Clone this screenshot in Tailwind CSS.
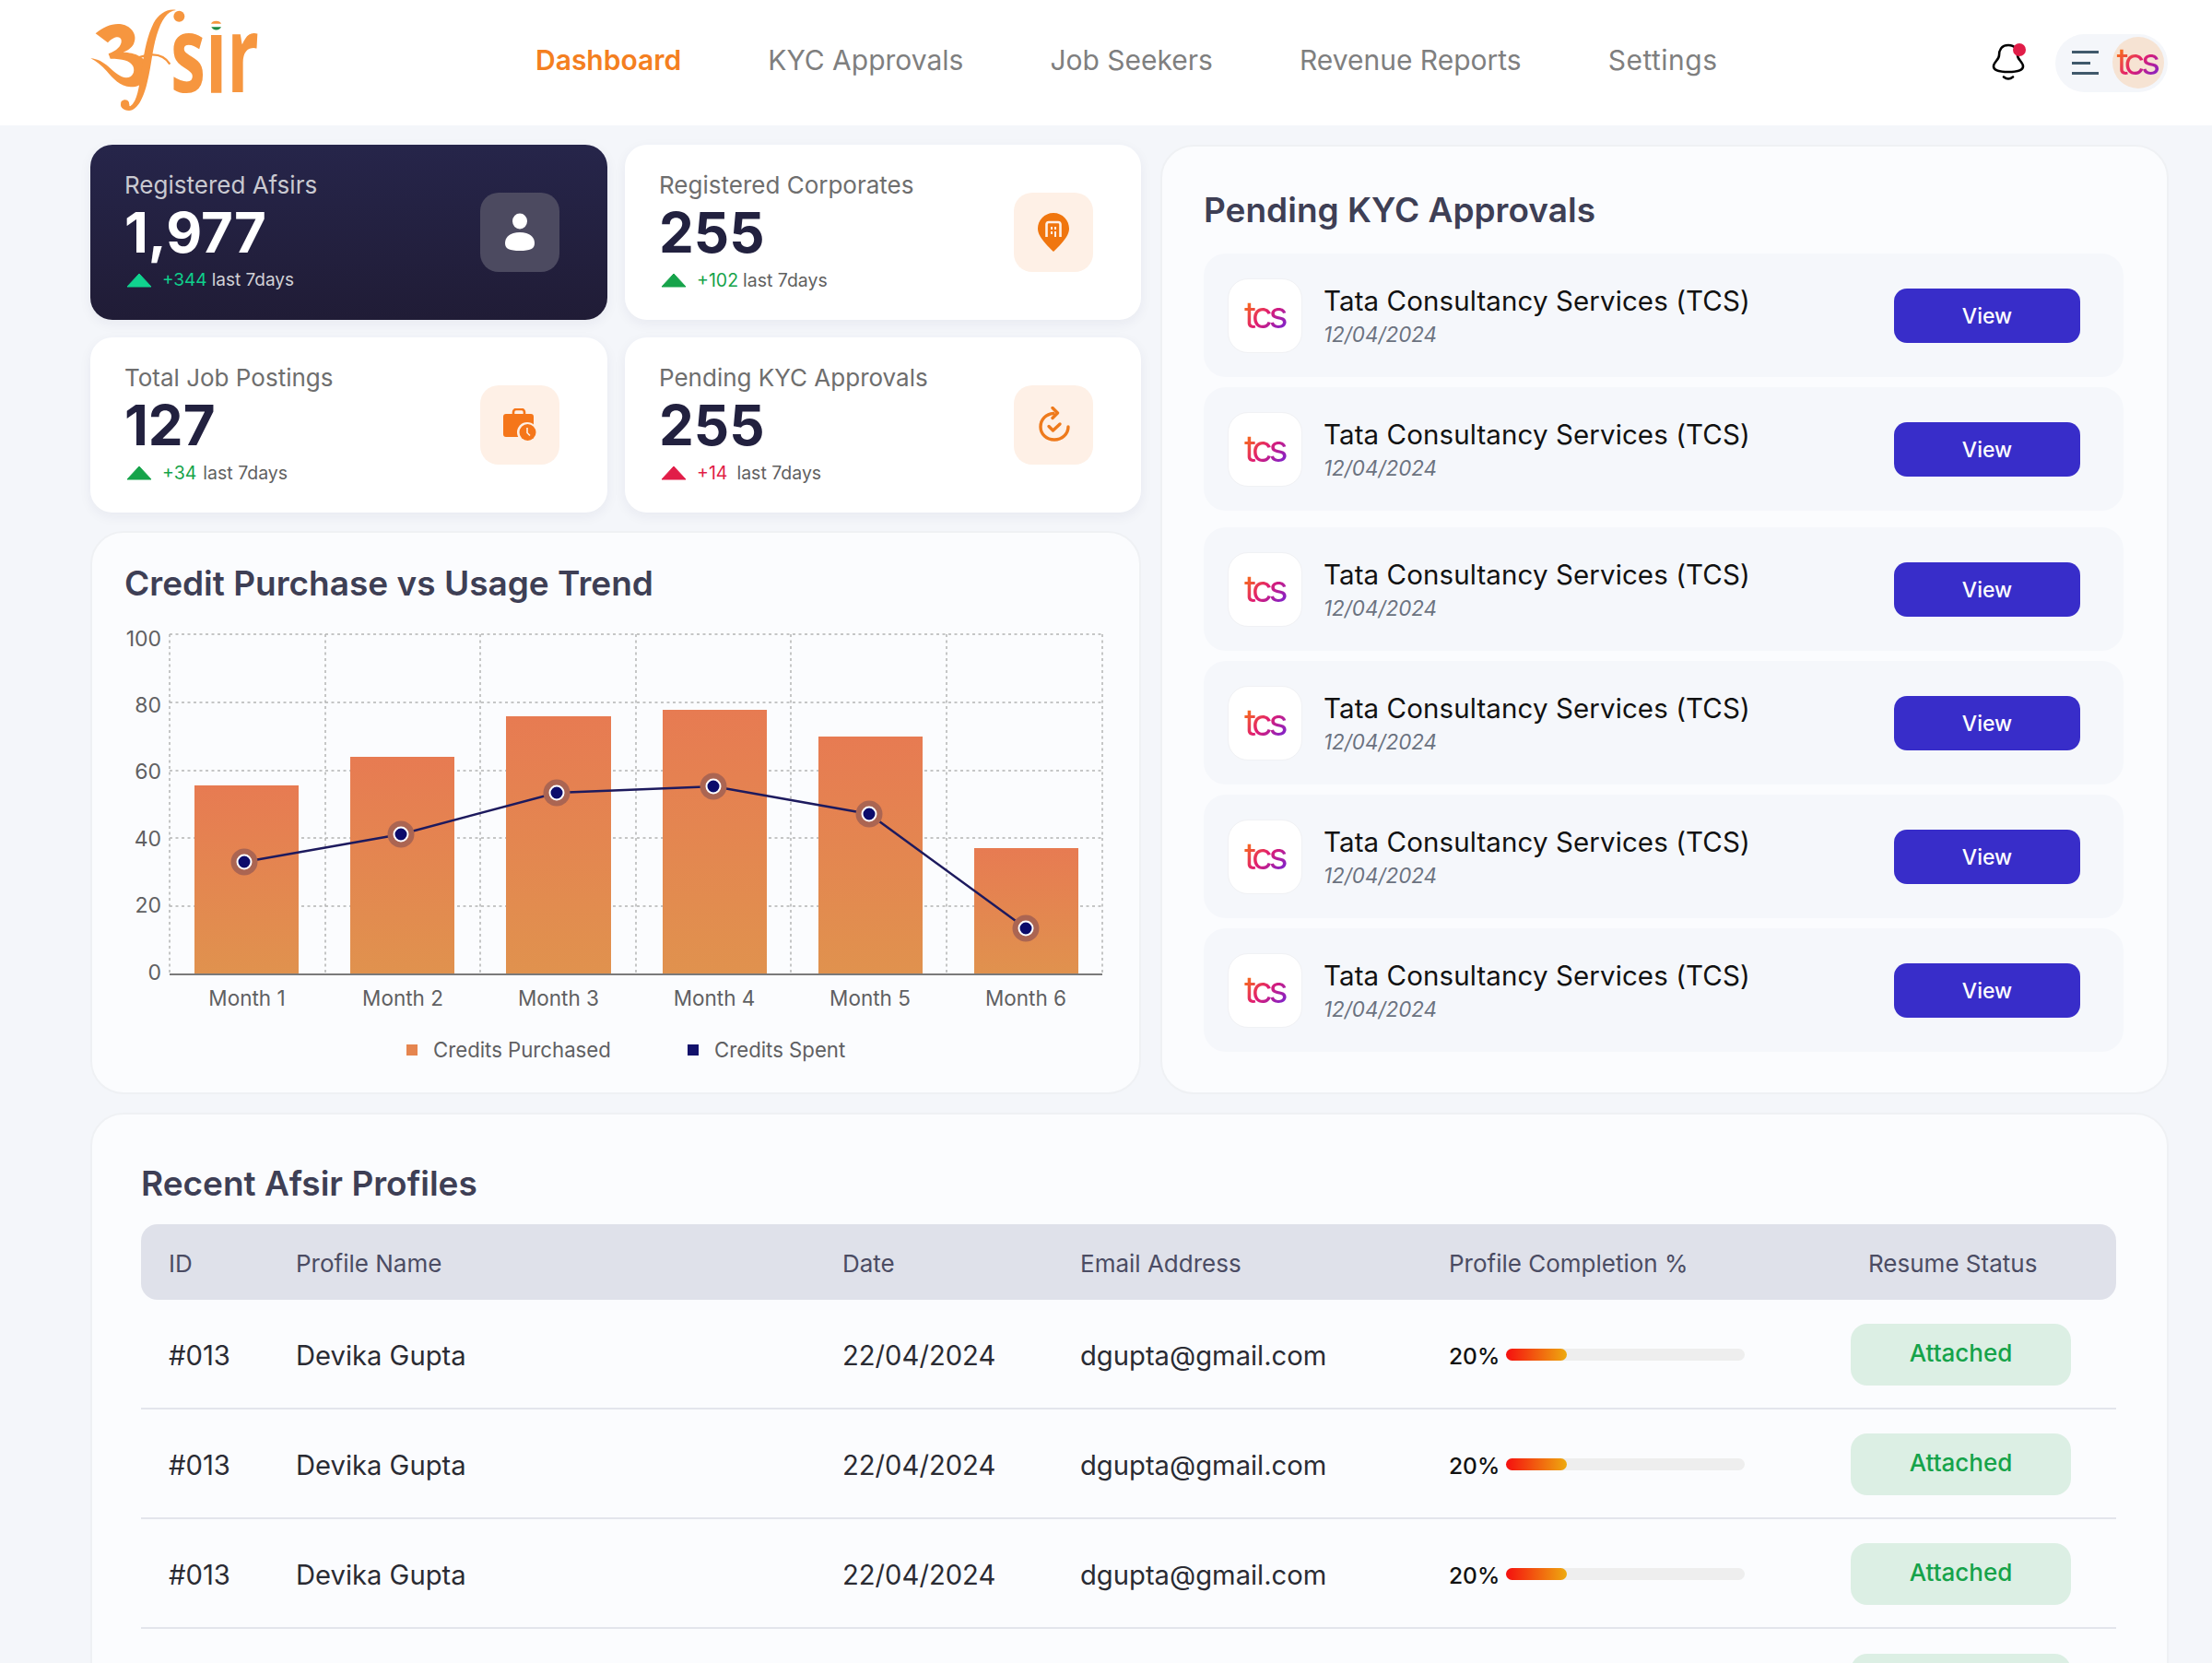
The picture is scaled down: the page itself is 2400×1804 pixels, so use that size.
<!DOCTYPE html>
<html>
<head>
<meta charset="utf-8">
<script src="https://cdn.jsdelivr.net/npm/@tailwindcss/browser@4"></script>
</head>
<body class="[font-family:Inter,sans-serif]">
<div class="h-[1804px] w-[2400px] overflow-hidden bg-[#f4f6fa]">
  <header class="flex h-[136px] items-center bg-white">
    <svg class="ml-[85px] mt-[-1px] h-[125px] w-[210px] shrink-0" viewBox="0 0 630 375">
      <path fill="#f6963f" d="M56 94C82 72 112 60 140 64C174 70 194 100 180 128C172 143 158 150 146 155C184 156 222 170 226 206C230 240 206 270 170 268C136 266 112 240 92 216C76 198 58 184 40 175C62 176 82 188 98 202C118 220 138 238 156 238C176 238 186 218 178 200C168 182 144 176 104 176L98 160C124 150 142 134 140 116C138 102 118 100 96 124Z"/>
      <path fill="#f6963f" d="M318 18C290 20 270 50 255 100C240 150 238 200 225 250C215 295 195 345 165 345C145 345 135 330 140 315C150 305 165 310 165 322C165 335 170 332 178 322C195 300 200 250 208 200C215 150 225 100 245 60C262 30 290 12 318 18Z"/>
      <circle cx="328" cy="38" r="18" fill="#f6963f"/>
      <circle cx="152" cy="326" r="14" fill="#f6963f"/>
      <path fill="none" stroke="#f6963f" stroke-width="7" d="M196 172C236 158 276 158 298 194"/>
      <text x="300" y="284" font-size="345" font-weight="700" textLength="288" lengthAdjust="spacingAndGlyphs" fill="#f6963f" style="font-family:'Open Sans',sans-serif">sir</text>
      <rect x="420" y="14" width="60" height="80" fill="#fff"/>
      <path fill="#f6963f" d="M432 62a17 12 0 0 1 33 0z"/>
      <path fill="#1f8a43" d="M433 73h32a17 14 0 0 1-32 0z"/>
    </svg>
    <nav class="ml-[286px] -mt-[6px] flex items-center gap-[94px] text-[30px] leading-none text-[#7f7f7f]">
      <a class="font-semibold text-[#f47f20]">Dashboard</a>
      <a>KYC Approvals</a>
      <a>Job Seekers</a>
      <a>Revenue Reports</a>
      <a class="tracking-[0.5px]">Settings</a>
    </nav>
    <div class="ml-auto mr-[48px] flex items-center gap-[33px]">
      <div class="relative h-[42px] w-[36px]">
        <svg class="h-[42px] w-[36px]" viewBox="0 0 36 42" fill="none" stroke="#000" stroke-width="2.6" stroke-linecap="round"><path d="M18 2C10 2 8 8 8 13C8 18 2 20 2 25C2 29 7 31 18 31C29 31 34 29 34 25C34 20 28 18 28 13C28 8 26 2 18 2Z"/><path d="M13 36.5Q18 40.500 23 36.500"/></svg>
        <span class="absolute right-[-1px] top-[0px] h-[14px] w-[14px] rounded-full bg-[#e11d48]"></span>
      </div>
      <div class="flex h-[63px] w-[122px] items-center justify-between rounded-full bg-[#f4f6fa] pl-[18px] pr-[4px]">
        <div class="flex flex-col gap-[8.500px]">
          <span class="block h-[3px] w-[29px] bg-[#40596b]"></span>
          <span class="block h-[3px] w-[20px] bg-[#40596b]"></span>
          <span class="block h-[3px] w-[29px] bg-[#40596b]"></span>
        </div>
        <div class="flex h-[56px] w-[56px] items-center justify-center rounded-full bg-[#f6e3d3]">
          <span class="bg-[linear-gradient(135deg,#f97316_10%,#e11d70_50%,#7c22ce_90%)] bg-clip-text pb-[3px] pr-[4px] text-[40px] font-normal leading-none tracking-[-4.500px] text-transparent">tcs</span>
        </div>
      </div>
    </div>
  </header>

  <main class="flex flex-col gap-[20px] pl-[98px] pr-[47px] pt-[21px]">
    <div class="flex gap-[21px]">
      <div class="flex w-[1140px] flex-col gap-[20px]">
        <div class="grid grid-cols-[561px_560px] gap-x-[19px] gap-y-[19px]">
          <!-- Card 1 -->
          <div class="flex h-[190px] items-center justify-between rounded-[24px] bg-[linear-gradient(180deg,#26254a,#201c36)] pl-[37px] pr-[52px] shadow-[0_4px_14px_rgba(30,40,80,0.06)]">
            <div>
              <p class="-mt-[1px] text-[26px] leading-[32px] text-[#c9c9d0]">Registered Afsirs</p>
              <p class="mt-[3px] text-[60px] font-bold leading-[64px] text-white">1,977</p>
              <p class="mt-[6px] flex items-center text-[19px] leading-[28px] text-[#d1d1d6]"><svg class="mr-[11px] ml-[2px] h-[16px] w-[28px]" viewBox="0 0 28 16"><path d="M14 1L27 15H1Z" fill="#10d38f" stroke="#10d38f" stroke-linejoin="round"/></svg><span class="text-[#0fcf8c]">+344</span><span class="ml-[5px]">last 7days</span></p>
            </div>
            <div class="flex h-[86px] w-[86px] items-center justify-center rounded-[20px] bg-[#4c4a60]">
              <svg class="h-[42px] w-[34px]" viewBox="0 0 34 42" fill="#fff"><ellipse cx="17" cy="9" rx="8" ry="8.500"/><path d="M1 33C1 25 8 21 17 21C26 21 33 25 33 33C33 39 28 41 17 41C6 41 1 39 1 33Z"/></svg>
            </div>
          </div>
          <!-- Card 2 -->
          <div class="flex h-[190px] items-center justify-between rounded-[24px] bg-white pl-[37px] pr-[52px] shadow-[0_4px_14px_rgba(30,40,80,0.06)]">
            <div>
              <p class="-mt-[1px] text-[26px] leading-[32px] text-[#6e6e6e]">Registered Corporates</p>
              <p class="mt-[3px] text-[60px] font-bold leading-[64px] text-[#22213f]">255</p>
              <p class="mt-[6px] flex items-center text-[19.500px] leading-[28px] text-[#5f5f5f]"><svg class="mr-[11px] ml-[2px] h-[16px] w-[28px]" viewBox="0 0 28 16"><path d="M14 1L27 15H1Z" fill="#16a34a" stroke="#16a34a" stroke-linejoin="round"/></svg><span class="text-[#16a34a]">+102</span><span class="ml-[5px]">last 7days</span></p>
            </div>
            <div class="flex h-[86px] w-[86px] items-center justify-center rounded-[20px] bg-[#fef0e6]">
              <svg class="h-[44px] w-[36px]" viewBox="0 0 36 44"><path d="M18 1C8 1 1 9 1 18C1 27 11 36 18 43C25 36 35 27 35 18C35 9 28 1 18 1Z" fill="#f0760f"/><path d="M10.500 27V13.500a2.500 2.500 0 0 1 2.500-2.500h10a2.500 2.500 0 0 1 2.500 2.500V27" fill="none" stroke="#fef0e6" stroke-width="2.600"/><path d="M15 16h2v3h-2zM19 16h2v3h-2zM15 21h2v3h-2zM19 21h2v6h-2z" fill="#fef0e6"/></svg>
            </div>
          </div>
          <!-- Card 3 -->
          <div class="flex h-[190px] items-center justify-between rounded-[24px] bg-white pl-[37px] pr-[52px] shadow-[0_4px_14px_rgba(30,40,80,0.06)]">
            <div>
              <p class="-mt-[1px] text-[26px] leading-[32px] text-[#6e6e6e]">Total Job Postings</p>
              <p class="mt-[3px] text-[60px] font-bold leading-[64px] text-[#22213f]">127</p>
              <p class="mt-[6px] flex items-center text-[19.500px] leading-[28px] text-[#5f5f5f]"><svg class="mr-[11px] ml-[2px] h-[16px] w-[28px]" viewBox="0 0 28 16"><path d="M14 1L27 15H1Z" fill="#16a34a" stroke="#16a34a" stroke-linejoin="round"/></svg><span class="text-[#16a34a]">+34</span><span class="ml-[7px]">last 7days</span></p>
            </div>
            <div class="flex h-[86px] w-[86px] items-center justify-center rounded-[20px] bg-[#fef0e6]">
              <svg class="h-[36px] w-[38px]" viewBox="0 0 38 36"><path d="M12 6V4a3 3 0 0 1 3-3h6a3 3 0 0 1 3 3v2" fill="none" stroke="#f5761a" stroke-width="2.600"/><rect x="1" y="6" width="33" height="25" rx="3" fill="#f5761a"/><circle cx="27" cy="26" r="11" fill="#fef0e6"/><circle cx="27.500" cy="26" r="9" fill="#f5761a"/><path d="M27 21v5.500l3 3" fill="none" stroke="#fef0e6" stroke-width="1.600"/></svg>
            </div>
          </div>
          <!-- Card 4 -->
          <div class="flex h-[190px] items-center justify-between rounded-[24px] bg-white pl-[37px] pr-[52px] shadow-[0_4px_14px_rgba(30,40,80,0.06)]">
            <div>
              <p class="-mt-[1px] text-[26px] leading-[32px] text-[#6e6e6e]">Pending KYC Approvals</p>
              <p class="mt-[3px] text-[60px] font-bold leading-[64px] text-[#22213f]">255</p>
              <p class="mt-[6px] flex items-center text-[19.500px] leading-[28px] text-[#5f5f5f]"><svg class="mr-[11px] ml-[2px] h-[16px] w-[28px]" viewBox="0 0 28 16"><path d="M14 1L27 15H1Z" fill="#e11d48" stroke="#e11d48" stroke-linejoin="round"/></svg><span class="text-[#e11d48]">+14</span><span class="ml-[10px]">last 7days</span></p>
            </div>
            <div class="flex h-[86px] w-[86px] items-center justify-center rounded-[20px] bg-[#fef0e6]">
              <svg class="-mt-[3px] ml-[2px] h-[38px] w-[36px]" viewBox="0 0 36 38" fill="none" stroke="#ee7a1c" stroke-width="3.400" stroke-linecap="round" stroke-linejoin="round"><path d="M17 7.500C9 8 3 14 3 22C3 30 9.500 36 18 36C26 36 33 30 33 22"/><path d="M16 1.500L21.500 7L16 12.500"/><path d="M12 21.500L16.500 26L24 19"/></svg>
            </div>
          </div>
        </div>
        <!-- Chart -->
        <section class="h-[611px] rounded-[36px] border-2 border-[#eff1f4] bg-[#fbfcfe]">
          <h2 class="h-[70px] pl-[35px] pt-[32px] text-[37px] font-semibold leading-[46px] text-[#3e3f55]">Credit Purchase vs Usage Trend</h2>
          <svg class="block" width="1136" height="536" viewBox="100 648 1136 536" style="font-family:Inter,sans-serif">
            <defs><linearGradient id="barfill" x1="0" y1="0" x2="0" y2="1"><stop offset="0" stop-color="#e77b52"/><stop offset="1" stop-color="#e0924e"/></linearGradient></defs>
            <g stroke="#b4b4b4" stroke-width="1.500" stroke-dasharray="3 3.500" fill="none">
              <path d="M184 688H1196M184 762H1196M184 836H1196M184 909H1196M184 983H1196"/>
              <path d="M184 688V1057M353 688V1057M521 688V1057M690 688V1057M858 688V1057M1027 688V1057M1196 688V1057"/>
            </g>
            <rect x="211" y="852" width="113" height="205" fill="url(#barfill)"/>
            <rect x="380" y="821" width="113" height="236" fill="url(#barfill)"/>
            <rect x="549" y="777" width="114" height="280" fill="url(#barfill)"/>
            <rect x="719" y="770" width="113" height="287" fill="url(#barfill)"/>
            <rect x="888" y="799" width="113" height="258" fill="url(#barfill)"/>
            <rect x="1057" y="920" width="113" height="137" fill="url(#barfill)"/>
            <path d="M184 1057H1196" stroke="#7a7a7a" stroke-width="2"/>
            <path d="M265 935L435 905L604 860L774 853L943 883L1113 1007" fill="none" stroke="#1d1a5e" stroke-width="2.500"/>
            <g fill="#ab6552">
              <circle cx="265" cy="935" r="14.500"/><circle cx="435" cy="905" r="14.500"/><circle cx="604" cy="860" r="14.500"/><circle cx="774" cy="853" r="14.500"/><circle cx="943" cy="883" r="14.500"/><circle cx="1113" cy="1007" r="14.500"/>
            </g>
            <g fill="#0c0c6b" stroke="#fff" stroke-width="2">
              <circle cx="265" cy="935" r="7.500"/><circle cx="435" cy="905" r="7.500"/><circle cx="604" cy="860" r="7.500"/><circle cx="774" cy="853" r="7.500"/><circle cx="943" cy="883" r="7.500"/><circle cx="1113" cy="1007" r="7.500"/>
            </g>
            <g fill="#5f6062" font-size="23" text-anchor="end">
              <text x="175" y="701">100</text><text x="175" y="773">80</text><text x="175" y="845">60</text><text x="175" y="918">40</text><text x="175" y="990">20</text><text x="175" y="1063">0</text>
            </g>
            <g fill="#5f6062" font-size="22.500" text-anchor="middle">
              <text x="268" y="1091">Month 1</text><text x="437" y="1091">Month 2</text><text x="606" y="1091">Month 3</text><text x="775" y="1091">Month 4</text><text x="944" y="1091">Month 5</text><text x="1113" y="1091">Month 6</text>
            </g>
            <rect x="441" y="1133" width="12" height="12" fill="#e5854f"/>
            <text x="470" y="1147" font-size="22.200" fill="#5f6062">Credits Purchased</text>
            <rect x="746" y="1133" width="12" height="12" fill="#12116b"/>
            <text x="775" y="1147" font-size="22.200" fill="#5f6062">Credits Spent</text>
          </svg>
        </section>
      </div>
      <!-- Pending KYC -->
      <section class="h-[1030px] w-[1094px] rounded-[36px] border-2 border-[#eff1f4] bg-[#fbfcfe] pl-[45px] pr-[47px]">
        <h2 class="pt-[46px] text-[37px] font-semibold leading-[46px] text-[#3e3f55]">Pending KYC Approvals</h2>
        <div class="mt-[24px] flex flex-col gap-[11px]">
          <div class="flex h-[134px] items-center rounded-[24px] bg-[#f5f7fb] pl-[26px] pr-[47px]">
            <div class="flex h-[81px] w-[81px] items-center justify-center rounded-[22px] border border-[#f0f1f4] bg-white"><span class="bg-[linear-gradient(135deg,#f97316_10%,#e11d70_50%,#7c22ce_90%)] bg-clip-text pr-[4px] pl-[2px] text-[40px] font-normal leading-none tracking-[-4.500px] text-transparent">tcs</span></div>
            <div class="ml-[23px]"><p class="text-[29.500px] leading-[38px] tracking-[0.1px] text-[#111]">Tata Consultancy Services (TCS)</p><p class="mt-[3px] text-[22.400px] italic leading-[30px] text-[#6b7280]">12/04/2024</p></div>
            <button class="ml-auto h-[59px] w-[202px] rounded-[14px] bg-[#382dc9] pt-[2px] text-[23px] font-medium text-white">View</button>
          </div>
          <div class="flex h-[134px] items-center rounded-[24px] bg-[#f5f7fb] pl-[26px] pr-[47px]">
            <div class="flex h-[81px] w-[81px] items-center justify-center rounded-[22px] border border-[#f0f1f4] bg-white"><span class="bg-[linear-gradient(135deg,#f97316_10%,#e11d70_50%,#7c22ce_90%)] bg-clip-text pr-[4px] pl-[2px] text-[40px] font-normal leading-none tracking-[-4.500px] text-transparent">tcs</span></div>
            <div class="ml-[23px]"><p class="text-[29.500px] leading-[38px] tracking-[0.1px] text-[#111]">Tata Consultancy Services (TCS)</p><p class="mt-[3px] text-[22.400px] italic leading-[30px] text-[#6b7280]">12/04/2024</p></div>
            <button class="ml-auto h-[59px] w-[202px] rounded-[14px] bg-[#382dc9] pt-[2px] text-[23px] font-medium text-white">View</button>
          </div>
          <div class="mt-[7px] flex h-[134px] items-center rounded-[24px] bg-[#f5f7fb] pl-[26px] pr-[47px]">
            <div class="flex h-[81px] w-[81px] items-center justify-center rounded-[22px] border border-[#f0f1f4] bg-white"><span class="bg-[linear-gradient(135deg,#f97316_10%,#e11d70_50%,#7c22ce_90%)] bg-clip-text pr-[4px] pl-[2px] text-[40px] font-normal leading-none tracking-[-4.500px] text-transparent">tcs</span></div>
            <div class="ml-[23px]"><p class="text-[29.500px] leading-[38px] tracking-[0.1px] text-[#111]">Tata Consultancy Services (TCS)</p><p class="mt-[3px] text-[22.400px] italic leading-[30px] text-[#6b7280]">12/04/2024</p></div>
            <button class="ml-auto h-[59px] w-[202px] rounded-[14px] bg-[#382dc9] pt-[2px] text-[23px] font-medium text-white">View</button>
          </div>
          <div class="flex h-[134px] items-center rounded-[24px] bg-[#f5f7fb] pl-[26px] pr-[47px]">
            <div class="flex h-[81px] w-[81px] items-center justify-center rounded-[22px] border border-[#f0f1f4] bg-white"><span class="bg-[linear-gradient(135deg,#f97316_10%,#e11d70_50%,#7c22ce_90%)] bg-clip-text pr-[4px] pl-[2px] text-[40px] font-normal leading-none tracking-[-4.500px] text-transparent">tcs</span></div>
            <div class="ml-[23px]"><p class="text-[29.500px] leading-[38px] tracking-[0.1px] text-[#111]">Tata Consultancy Services (TCS)</p><p class="mt-[3px] text-[22.400px] italic leading-[30px] text-[#6b7280]">12/04/2024</p></div>
            <button class="ml-auto h-[59px] w-[202px] rounded-[14px] bg-[#382dc9] pt-[2px] text-[23px] font-medium text-white">View</button>
          </div>
          <div class="flex h-[134px] items-center rounded-[24px] bg-[#f5f7fb] pl-[26px] pr-[47px]">
            <div class="flex h-[81px] w-[81px] items-center justify-center rounded-[22px] border border-[#f0f1f4] bg-white"><span class="bg-[linear-gradient(135deg,#f97316_10%,#e11d70_50%,#7c22ce_90%)] bg-clip-text pr-[4px] pl-[2px] text-[40px] font-normal leading-none tracking-[-4.500px] text-transparent">tcs</span></div>
            <div class="ml-[23px]"><p class="text-[29.500px] leading-[38px] tracking-[0.1px] text-[#111]">Tata Consultancy Services (TCS)</p><p class="mt-[3px] text-[22.400px] italic leading-[30px] text-[#6b7280]">12/04/2024</p></div>
            <button class="ml-auto h-[59px] w-[202px] rounded-[14px] bg-[#382dc9] pt-[2px] text-[23px] font-medium text-white">View</button>
          </div>
          <div class="flex h-[134px] items-center rounded-[24px] bg-[#f5f7fb] pl-[26px] pr-[47px]">
            <div class="flex h-[81px] w-[81px] items-center justify-center rounded-[22px] border border-[#f0f1f4] bg-white"><span class="bg-[linear-gradient(135deg,#f97316_10%,#e11d70_50%,#7c22ce_90%)] bg-clip-text pr-[4px] pl-[2px] text-[40px] font-normal leading-none tracking-[-4.500px] text-transparent">tcs</span></div>
            <div class="ml-[23px]"><p class="text-[29.500px] leading-[38px] tracking-[0.1px] text-[#111]">Tata Consultancy Services (TCS)</p><p class="mt-[3px] text-[22.400px] italic leading-[30px] text-[#6b7280]">12/04/2024</p></div>
            <button class="ml-auto h-[59px] w-[202px] rounded-[14px] bg-[#382dc9] pt-[2px] text-[23px] font-medium text-white">View</button>
          </div>
        </div>
      </section>
    </div>

    <!-- Recent profiles -->
    <section class="rounded-t-[36px] border-2 border-[#eff1f4] bg-[#fbfcfe] pl-[53px] pr-[55px] pb-[40px]">
      <h2 class="pt-[52px] text-[37px] font-semibold leading-[46px] text-[#3e3f55]">Recent Afsir Profiles</h2>
      <div class="mt-[21px] grid h-[82px] grid-cols-[138px_593px_258px_400px_436px_1fr] items-center rounded-[18px] bg-[#dfe1ea] pl-[30px] pt-[3px] text-[26px] text-[#4b4c63]">
        <span>ID</span><span>Profile Name</span><span>Date</span><span>Email Address</span><span>Profile Completion %</span><span class="whitespace-nowrap pl-[19px]">Resume Status</span>
      </div>

      <div class="grid h-[119px] grid-cols-[138px_593px_258px_400px_436px_1fr] items-center border-b-2 border-[#e3e5ec] pl-[30px] pt-[2px] text-[29.200px] text-[#2a2b33]">
        <span class="pt-[3px]">#013</span><span class="pt-[3px]">Devika Gupta</span><span class="pt-[3px]">22/04/2024</span><span class="pt-[3px]">dgupta@gmail.com</span>
        <div class="flex items-center"><span class="w-[62px] pt-[4px] text-[24.500px] font-medium text-[#111]">20%</span><div class="h-[13px] w-[259px] rounded-full bg-[#eeeeee]"><div class="h-[13px] w-[66px] rounded-full bg-[linear-gradient(90deg,#f50f0f,#eeaa0f)]"></div></div></div>
        <div class="flex h-[67px] w-[239px] items-center justify-center rounded-[18px] bg-[#dcefe4] pb-[4px] text-[26px] font-medium text-[#16a34a]">Attached</div>
      </div>
      <div class="grid h-[119px] grid-cols-[138px_593px_258px_400px_436px_1fr] items-center border-b-2 border-[#e3e5ec] pl-[30px] pt-[2px] text-[29.200px] text-[#2a2b33]">
        <span class="pt-[3px]">#013</span><span class="pt-[3px]">Devika Gupta</span><span class="pt-[3px]">22/04/2024</span><span class="pt-[3px]">dgupta@gmail.com</span>
        <div class="flex items-center"><span class="w-[62px] pt-[4px] text-[24.500px] font-medium text-[#111]">20%</span><div class="h-[13px] w-[259px] rounded-full bg-[#eeeeee]"><div class="h-[13px] w-[66px] rounded-full bg-[linear-gradient(90deg,#f50f0f,#eeaa0f)]"></div></div></div>
        <div class="flex h-[67px] w-[239px] items-center justify-center rounded-[18px] bg-[#dcefe4] pb-[4px] text-[26px] font-medium text-[#16a34a]">Attached</div>
      </div>
      <div class="grid h-[119px] grid-cols-[138px_593px_258px_400px_436px_1fr] items-center border-b-2 border-[#e3e5ec] pl-[30px] pt-[2px] text-[29.200px] text-[#2a2b33]">
        <span class="pt-[3px]">#013</span><span class="pt-[3px]">Devika Gupta</span><span class="pt-[3px]">22/04/2024</span><span class="pt-[3px]">dgupta@gmail.com</span>
        <div class="flex items-center"><span class="w-[62px] pt-[4px] text-[24.500px] font-medium text-[#111]">20%</span><div class="h-[13px] w-[259px] rounded-full bg-[#eeeeee]"><div class="h-[13px] w-[66px] rounded-full bg-[linear-gradient(90deg,#f50f0f,#eeaa0f)]"></div></div></div>
        <div class="flex h-[67px] w-[239px] items-center justify-center rounded-[18px] bg-[#dcefe4] pb-[4px] text-[26px] font-medium text-[#16a34a]">Attached</div>
      </div>
      <div class="grid h-[119px] grid-cols-[138px_593px_258px_400px_436px_1fr] items-center pl-[30px] pt-[2px] text-[29.200px] text-[#2a2b33]">
        <span></span><span></span><span></span><span></span><span></span>
        <div class="h-[67px] w-[239px] rounded-[18px] bg-[#dcefe4]"></div>
      </div>
    </section>
  </main>
</div>
</body>
</html>
